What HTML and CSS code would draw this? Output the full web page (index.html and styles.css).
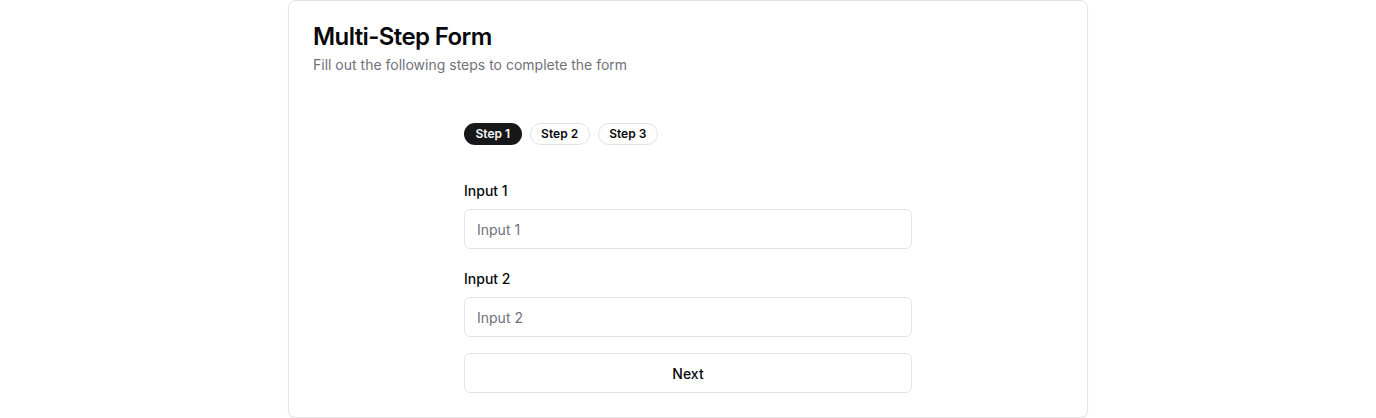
FILE: index.html
```html
<!DOCTYPE html>
<html lang="en">
<head>
<meta charset="utf-8">
<title>Multi-Step Form</title>
<link rel="stylesheet" href="styles.css">
</head>
<body>
<div class="page">
  <div class="card">
    <div class="card-header">
      <h1 class="card-title">Multi-Step Form</h1>
      <p class="card-desc">Fill out the following steps to complete the form</p>
    </div>
    <div class="card-content">
      <div class="form">
        <div class="steps">
          <span class="badge badge-active">Step 1</span>
          <span class="badge">Step 2</span>
          <span class="badge">Step 3</span>
        </div>
        <div class="field">
          <label class="label" for="in1">Input 1</label>
          <input class="input" id="in1" placeholder="Input 1">
        </div>
        <div class="field">
          <label class="label" for="in2">Input 2</label>
          <input class="input" id="in2" placeholder="Input 2">
        </div>
        <button class="btn">Next</button>
      </div>
    </div>
  </div>
</div>
</body>
</html>
```
FILE: styles.css
```css
* { box-sizing: border-box; }
html, body { margin: 0; padding: 0; background: #ffffff; }
body {
  font-family: Inter, "Noto Sans", sans-serif;
  color: #09090b;
}
.page {
  display: flex;
  justify-content: center;
}
.card {
  width: 800px;
  border: 1px solid #e4e4e7;
  border-radius: 8px;
  background: #fff;
  box-shadow: 0 1px 2px rgba(0,0,0,0.05);
}
.card-header {
  padding: 24px;
  display: flex;
  flex-direction: column;
  gap: 6px;
}
.card-title {
  margin: 0;
  font-size: 24px;
  line-height: 24px;
  font-weight: 600;
  letter-spacing: -0.025em;
}
.card-desc {
  margin: 0;
  font-size: 14px;
  line-height: 20px;
  color: #71717a;
}
.card-content {
  padding: 0 24px 24px;
}
.form {
  width: 448px;
  margin: 0 auto;
  padding-top: 24px;
  display: flex;
  flex-direction: column;
}
.steps {
  display: flex;
  gap: 8px;
  margin-bottom: 36px;
}
.badge {
  display: inline-flex;
  align-items: center;
  height: 22px;
  padding: 0 10.5px;
  border: 1px solid #e4e4e7;
  border-radius: 9999px;
  font-size: 12px;
  line-height: 16px;
  font-weight: 600;
  color: #09090b;
  background: #fff;
}
.badge-active {
  background: #18181b;
  border-color: transparent;
  color: #fafafa;
}
.field {
  display: flex;
  flex-direction: column;
  gap: 8px;
  margin-bottom: 20px;
}
.field + .field { margin-bottom: 16px; }
.label {
  font-size: 14px;
  line-height: 20px;
  font-weight: 500;
}
.input {
  height: 40px;
  width: 100%;
  border: 1px solid #e4e4e7;
  border-radius: 6px;
  padding: 0 12px;
  font-family: inherit;
  font-size: 14px;
  color: #09090b;
  background: #fff;
  outline: none;
}
.input::placeholder { color: #71717a; }
.btn {
  height: 40px;
  width: 100%;
  border: 1px solid #e4e4e7;
  border-radius: 6px;
  background: #fff;
  font-family: inherit;
  font-size: 14px;
  font-weight: 500;
  color: #09090b;
  cursor: pointer;
}
```
